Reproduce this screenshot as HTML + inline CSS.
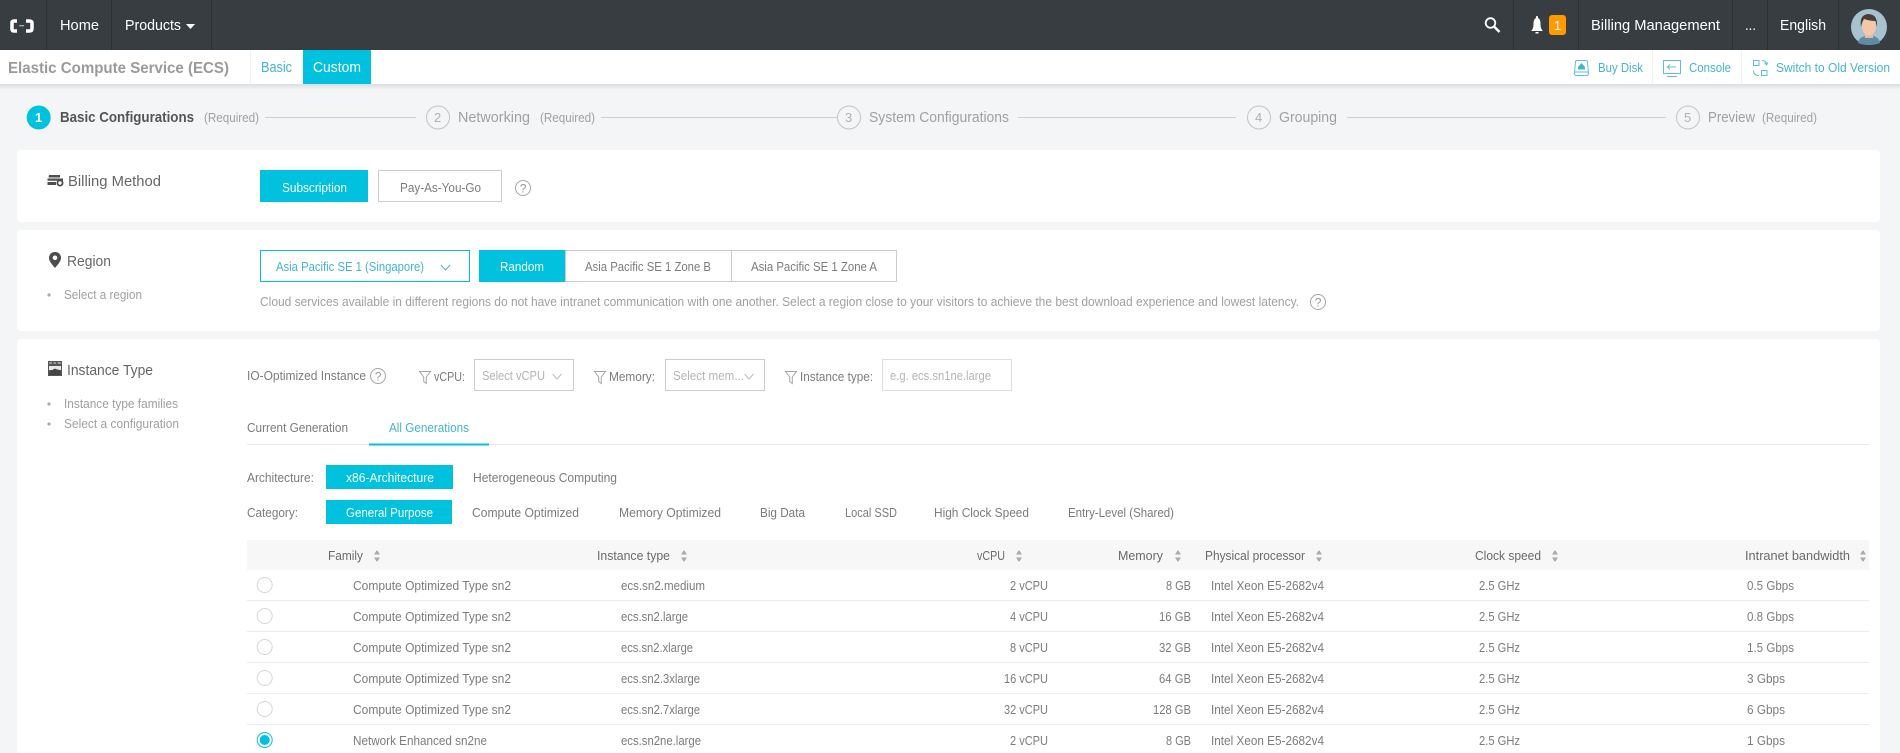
<!DOCTYPE html>
<html lang="en">
<head>
<meta charset="utf-8">
<title>Elastic Compute Service (ECS)</title>
<style>
html,body{margin:0;padding:0;width:1900px;height:753px;overflow:hidden;background:#f4f5f6}
svg{display:block}
text{font-family:"Liberation Sans",sans-serif;font-size:13px;fill:#7c7c7c}
.nav{font-size:15px;fill:#fff}
.teal{fill:#45b4cf}
.w{fill:#fff}
.d{fill:#666}
.l{fill:#a0a0a0}
.p{fill:#b4b4b4}
.st{font-size:15px;fill:#a0a0a0}
.h{font-size:15px;fill:#666}
.th{fill:#6a6a6a}
.ln{stroke:#cfcfcf;stroke-width:1}
.rd{fill:#fff;stroke:#d6d6d6;stroke-width:1}
.sep{stroke:#f0f0f0;stroke-width:1}
.si{fill:#aaa}
</style>
</head>
<body>
<svg width="1900" height="753" viewBox="0 0 1900 753" xmlns="http://www.w3.org/2000/svg">
<defs>
<linearGradient id="sh" x1="0" y1="0" x2="0" y2="1"><stop offset="0" stop-color="#000" stop-opacity=".1"/><stop offset="1" stop-color="#000" stop-opacity="0"/></linearGradient>
<g id="sort"><path d="M0 -1.5L-3 -1.5L0 -6L3 -1.5Z M-3 1.5L3 1.5L0 6Z" class="si"/></g>
<g id="q"><circle cx="0" cy="0" r="7.5" fill="none" stroke="#a5a5a5" stroke-width="1"/><text x="-3.3" y="4.5" style="font-size:12px;fill:#999">?</text></g>
<path id="fl" d="M0.5 0.5H11.5L7.3 6V12.5L4.7 10.5V6Z" fill="none" stroke="#a5a5a5" stroke-width="1"/>
</defs>
<rect width="1900" height="753" fill="#f4f5f6"/>

<!-- top nav -->
<rect width="1900" height="50" fill="#373d41"/>
<g stroke="#2c3134" stroke-width="1">
<path d="M46.5 0V50M111.5 0V50M211.5 0V50M1513.5 0V50M1578.5 0V50M1732.5 0V50M1767.5 0V50M1838.5 0V50"/>
</g>
<path d="M17 21H14Q12 21 12 23V29Q12 31 14 31H17M26 21H29Q32 21 32 23V29Q32 31 29 31H26" fill="none" stroke="#fff" stroke-width="3.5"/>
<rect x="19.3" y="25" width="4.8" height="1.4" fill="#a8a8a8"/>
<text class="nav" x="60" y="30" textLength="39" lengthAdjust="spacingAndGlyphs">Home</text>
<text class="nav" x="125" y="30" textLength="56" lengthAdjust="spacingAndGlyphs">Products</text>
<path d="M186 24H195L190.5 29Z" fill="#fff"/>
<circle cx="1490.5" cy="23" r="4.8" fill="none" stroke="#fff" stroke-width="1.8"/>
<path d="M1494 26.5L1499.5 32" stroke="#fff" stroke-width="2.4"/>
<path d="M1531 31Q1533.5 29 1533.5 24Q1533.5 19 1536 18V16.5Q1537 15.5 1538 16.5V18Q1540.5 19 1540.5 24Q1540.5 29 1543 31Z M1535.5 32H1538.5V33.5H1535.5Z" fill="#fff"/>
<rect x="1549" y="15" width="17" height="20" rx="3" fill="#ff9a00"/>
<text x="1554" y="30" style="font-size:13px;fill:#fff">1</text>
<text class="nav" x="1591" y="30" textLength="129" lengthAdjust="spacingAndGlyphs">Billing Management</text>
<text class="nav" x="1745" y="30" textLength="11" lengthAdjust="spacingAndGlyphs">...</text>
<text class="nav" x="1780" y="30" textLength="46" lengthAdjust="spacingAndGlyphs">English</text>
<circle cx="1869" cy="27" r="18" fill="#a8c3cf"/>
<path d="M1858 43Q1859 37 1865 36H1873Q1879 37 1880 43Q1875 45 1869 45Q1863 45 1858 43Z" fill="#5f8ca3"/>
<rect x="1865" y="31" width="8" height="7" fill="#e9bb9c"/>
<ellipse cx="1869" cy="26" rx="7" ry="9.5" fill="#f2c8a9"/>
<path d="M1861 27Q1859 15 1868 14Q1878 14 1877 27L1875.5 21Q1870 21 1864 19Q1862 22 1861 27Z" fill="#4a3e3a"/>

<!-- subnav -->
<rect y="84" width="1900" height="6" fill="url(#sh)"/>
<rect y="50" width="1900" height="34" fill="#fff"/>
<text x="8" y="73" textLength="221" lengthAdjust="spacingAndGlyphs" style="font-size:16px;font-weight:bold;fill:#9a9a9a">Elastic Compute Service (ECS)</text>
<path d="M250.5 50V84" class="sep"/>
<text class="teal" x="261" y="72" textLength="31" lengthAdjust="spacingAndGlyphs" style="font-size:15px">Basic</text>
<rect x="303" y="50" width="68" height="34" fill="#00c1de"/>
<text class="w" x="313" y="72" textLength="48" lengthAdjust="spacingAndGlyphs" style="font-size:15px">Custom</text>

<g fill="none" stroke="#5fbfd6" stroke-width="1">
<path d="M1577 60.5H1586Q1587.5 60.5 1587.5 62L1588.5 73.5Q1588.5 75.5 1586.5 75.5H1576.5Q1574.5 75.5 1574.5 73.5L1575.5 62Q1575.5 60.5 1577 60.5Z"/>
<path d="M1575 72H1588"/>
<path d="M1663.5 60.5H1680.5V73.5H1663.5ZM1667 76.5H1677M1676 67H1668M1670 64.5L1667.5 67L1670 69.5"/>
<path d="M1753.5 60.5H1759V65.5H1753.5ZM1761.5 70.5H1767V75.5H1761.5ZM1762 60.5Q1766.5 60.5 1766.5 64.5M1764.5 62.5L1766.5 65L1768 62.5M1759 75.5Q1753.5 75.5 1753.5 70.5"/>
</g>
<path d="M1581.5 63L1585 67H1578Z" fill="#45b4cf"/>
<rect x="1578" y="67" width="7" height="2.5" fill="#45b4cf"/>
<path d="M1652.5 50V84M1741.5 50V84" class="sep"/>
<text class="teal" x="1598" y="72" textLength="45" lengthAdjust="spacingAndGlyphs">Buy Disk</text>
<text class="teal" x="1689" y="72" textLength="42" lengthAdjust="spacingAndGlyphs">Console</text>
<text class="teal" x="1776" y="72" textLength="114" lengthAdjust="spacingAndGlyphs">Switch to Old Version</text>

<!-- steps -->
<circle cx="38.7" cy="117.5" r="12" fill="#00c1de"/>
<text x="35" y="122" style="font-size:13px;font-weight:bold;fill:#fff">1</text>
<text x="60" y="122" textLength="134" lengthAdjust="spacingAndGlyphs" style="font-size:15px;font-weight:bold;fill:#555">Basic Configurations</text>
<text class="l" x="204" y="122" textLength="55" lengthAdjust="spacingAndGlyphs">(Required)</text>
<path class="ln" d="M265 117.5H416M601 117.5H837M1018 117.5H1236M1347 117.5H1666"/>
<g fill="#f4f5f6" stroke="#c4c4c4" stroke-width="1">
<circle cx="438" cy="117.5" r="11.5"/><circle cx="849" cy="117.5" r="11.5"/><circle cx="1259" cy="117.5" r="11.5"/><circle cx="1688" cy="117.5" r="11.5"/>
</g>
<text x="434" y="122" style="font-size:13px;fill:#b0b0b0">2</text>
<text x="845" y="122" style="font-size:13px;fill:#b0b0b0">3</text>
<text x="1255" y="122" style="font-size:13px;fill:#b0b0b0">4</text>
<text x="1684" y="122" style="font-size:13px;fill:#b0b0b0">5</text>
<text class="st" x="458" y="122" textLength="72" lengthAdjust="spacingAndGlyphs">Networking</text>
<text class="l" x="540" y="122" textLength="55" lengthAdjust="spacingAndGlyphs">(Required)</text>
<text class="st" x="869" y="122" textLength="140" lengthAdjust="spacingAndGlyphs">System Configurations</text>
<text class="st" x="1279" y="122" textLength="58" lengthAdjust="spacingAndGlyphs">Grouping</text>
<text class="st" x="1708" y="122" textLength="47" lengthAdjust="spacingAndGlyphs">Preview</text>
<text class="l" x="1762" y="122" textLength="55" lengthAdjust="spacingAndGlyphs">(Required)</text>

<!-- cards -->
<rect x="17" y="150" width="1863" height="72" rx="4" fill="#fff"/>
<rect x="17" y="230" width="1863" height="101" rx="4" fill="#fff"/>
<rect x="17" y="339" width="1863" height="430" rx="4" fill="#fff"/>

<!-- billing -->
<path d="M49 175H60V177.5H48.5ZM47.5 178.5H63V180.8H47.5ZM47.5 182H56V185H47.5Z" fill="#4e4e4e"/>
<circle cx="60" cy="183" r="2.6" fill="#fff" stroke="#4e4e4e" stroke-width="1.8"/>
<text class="h" x="68" y="186" textLength="93" lengthAdjust="spacingAndGlyphs">Billing Method</text>
<rect x="260" y="170" width="108" height="32" fill="#00c1de"/>
<text class="w" x="282" y="192" textLength="65" lengthAdjust="spacingAndGlyphs">Subscription</text>
<rect x="378.5" y="170.5" width="123" height="31" fill="#fff" stroke="#ccc"/>
<text x="400" y="192" textLength="81" lengthAdjust="spacingAndGlyphs">Pay-As-You-Go</text>
<use href="#q" x="523" y="188"/>

<!-- region -->
<path d="M55 252C51 252 49 255 49 258C49 261.5 53 265.5 55 268C57 265.5 61 261.5 61 258C61 255 59 252 55 252Z" fill="#4e4e4e"/>
<circle cx="55" cy="257.8" r="2.3" fill="#fff"/>
<text class="h" x="67" y="266" textLength="44" lengthAdjust="spacingAndGlyphs">Region</text>
<circle cx="49" cy="295" r="1.6" fill="#aaa"/>
<text class="l" x="64" y="299" textLength="78" lengthAdjust="spacingAndGlyphs">Select a region</text>
<rect x="260.5" y="250.5" width="209" height="31" fill="#fff" stroke="#00c1de"/>
<text class="teal" x="276" y="271" textLength="148" lengthAdjust="spacingAndGlyphs">Asia Pacific SE 1 (Singapore)</text>
<path d="M441 265L445.5 270L450 265" fill="none" stroke="#45b4cf"/>
<rect x="565.5" y="250.5" width="331" height="31" fill="#fff" stroke="#ccc"/>
<path d="M731.5 250V282" stroke="#ccc"/>
<rect x="479" y="250" width="86" height="32" fill="#00c1de"/>
<text class="w" x="500" y="271" textLength="44" lengthAdjust="spacingAndGlyphs">Random</text>
<text x="585" y="271" textLength="126" lengthAdjust="spacingAndGlyphs">Asia Pacific SE 1 Zone B</text>
<text x="751" y="271" textLength="126" lengthAdjust="spacingAndGlyphs">Asia Pacific SE 1 Zone A</text>
<text class="l" x="260" y="306" textLength="1039" lengthAdjust="spacingAndGlyphs">Cloud services available in different regions do not have intranet communication with one another. Select a region close to your visitors to achieve the best download experience and lowest latency.</text>
<use href="#q" x="1318" y="302"/>

<!-- instance type -->
<rect x="48" y="361" width="14" height="15" fill="#555"/>
<path d="M49 363H52M53.5 363H56M57.5 363H61" stroke="#ddd" stroke-width="1"/>
<rect x="49" y="366" width="12" height="4" fill="#e8e8e8"/>
<path d="M49 375Q49 371 52 371Q54 367.5 57 369.5Q60 369.5 60.5 372V375Z" fill="#444"/>
<text class="h" x="67" y="375" textLength="86" lengthAdjust="spacingAndGlyphs">Instance Type</text>
<circle cx="49" cy="404" r="1.6" fill="#aaa"/>
<circle cx="49" cy="424" r="1.6" fill="#aaa"/>
<text class="l" x="64" y="408" textLength="114" lengthAdjust="spacingAndGlyphs">Instance type families</text>
<text class="l" x="64" y="428" textLength="115" lengthAdjust="spacingAndGlyphs">Select a configuration</text>

<text x="247" y="380" textLength="119" lengthAdjust="spacingAndGlyphs">IO-Optimized Instance</text>
<use href="#q" x="378" y="376"/>
<use href="#fl" x="419" y="371"/>
<text x="434" y="381" textLength="31" lengthAdjust="spacingAndGlyphs">vCPU:</text>
<rect x="474.5" y="359.5" width="99" height="31" fill="#fff" stroke="#ccc"/>
<text class="p" x="482" y="380" textLength="63" lengthAdjust="spacingAndGlyphs">Select vCPU</text>
<path d="M552.5 374L557 379L561.5 374" fill="none" stroke="#bbb"/>
<use href="#fl" x="594" y="371"/>
<text x="609" y="381" textLength="46" lengthAdjust="spacingAndGlyphs">Memory:</text>
<rect x="665.5" y="359.5" width="99" height="31" fill="#fff" stroke="#ccc"/>
<text class="p" x="673" y="380" textLength="71" lengthAdjust="spacingAndGlyphs">Select mem...</text>
<path d="M744.5 374L749 379L753.5 374" fill="none" stroke="#bbb"/>
<use href="#fl" x="785" y="371"/>
<text x="800" y="381" textLength="73" lengthAdjust="spacingAndGlyphs">Instance type:</text>
<rect x="882.5" y="359.5" width="129" height="31" fill="#fff" stroke="#ddd"/>
<text class="p" x="890" y="380" textLength="101" lengthAdjust="spacingAndGlyphs">e.g. ecs.sn1ne.large</text>

<!-- tabs -->
<text x="247" y="432" textLength="101" lengthAdjust="spacingAndGlyphs">Current Generation</text>
<text class="teal" x="389" y="432" textLength="80" lengthAdjust="spacingAndGlyphs">All Generations</text>
<path d="M247 444.5H1869" stroke="#e8e8e8"/>
<rect x="369" y="443.5" width="120" height="2" fill="#00c1de"/>

<!-- arch / category -->
<text x="247" y="482" textLength="67" lengthAdjust="spacingAndGlyphs">Architecture:</text>
<rect x="326" y="465" width="127" height="24" fill="#00c1de"/>
<text class="w" x="346" y="482" textLength="88" lengthAdjust="spacingAndGlyphs">x86-Architecture</text>
<text x="473" y="482" textLength="144" lengthAdjust="spacingAndGlyphs">Heterogeneous Computing</text>
<text x="247" y="517" textLength="51" lengthAdjust="spacingAndGlyphs">Category:</text>
<rect x="326" y="500" width="126" height="24" fill="#00c1de"/>
<text class="w" x="346" y="517" textLength="87" lengthAdjust="spacingAndGlyphs">General Purpose</text>
<text x="472" y="517" textLength="107" lengthAdjust="spacingAndGlyphs">Compute Optimized</text>
<text x="619" y="517" textLength="102" lengthAdjust="spacingAndGlyphs">Memory Optimized</text>
<text x="760" y="517" textLength="45" lengthAdjust="spacingAndGlyphs">Big Data</text>
<text x="845" y="517" textLength="52" lengthAdjust="spacingAndGlyphs">Local SSD</text>
<text x="934" y="517" textLength="95" lengthAdjust="spacingAndGlyphs">High Clock Speed</text>
<text x="1068" y="517" textLength="106" lengthAdjust="spacingAndGlyphs">Entry-Level (Shared)</text>

<!-- table header -->
<rect x="247" y="540" width="1622" height="30" fill="#f7f7f7"/>
<text class="th" x="328" y="560" textLength="35" lengthAdjust="spacingAndGlyphs">Family</text>
<use href="#sort" x="377" y="556"/>
<text class="th" x="597" y="560" textLength="73" lengthAdjust="spacingAndGlyphs">Instance type</text>
<use href="#sort" x="684" y="556"/>
<text class="th" x="977" y="560" textLength="28" lengthAdjust="spacingAndGlyphs">vCPU</text>
<use href="#sort" x="1019" y="556"/>
<text class="th" x="1118" y="560" textLength="45" lengthAdjust="spacingAndGlyphs">Memory</text>
<use href="#sort" x="1178" y="556"/>
<text class="th" x="1205" y="560" textLength="100" lengthAdjust="spacingAndGlyphs">Physical processor</text>
<use href="#sort" x="1319" y="556"/>
<text class="th" x="1475" y="560" textLength="66" lengthAdjust="spacingAndGlyphs">Clock speed</text>
<use href="#sort" x="1555" y="556"/>
<text class="th" x="1745" y="560" textLength="105" lengthAdjust="spacingAndGlyphs">Intranet bandwidth</text>
<use href="#sort" x="1863" y="556"/>

<!-- rows -->
<path d="M247 600.5H1869M247 631.5H1869M247 662.5H1869M247 693.5H1869M247 724.5H1869" stroke="#ececec"/>
<circle class="rd" cx="264.7" cy="585" r="7.5"/>
<circle class="rd" cx="264.7" cy="616" r="7.5"/>
<circle class="rd" cx="264.7" cy="647" r="7.5"/>
<circle class="rd" cx="264.7" cy="678" r="7.5"/>
<circle class="rd" cx="264.7" cy="709" r="7.5"/>
<circle cx="264.7" cy="740" r="7.5" fill="#fff" stroke="#00c1de"/>
<circle cx="264.7" cy="740" r="5" fill="#00c1de"/>

<g text-anchor="start">
<text x="353" y="590" textLength="158" lengthAdjust="spacingAndGlyphs">Compute Optimized Type sn2</text>
<text x="353" y="621" textLength="158" lengthAdjust="spacingAndGlyphs">Compute Optimized Type sn2</text>
<text x="353" y="652" textLength="158" lengthAdjust="spacingAndGlyphs">Compute Optimized Type sn2</text>
<text x="353" y="683" textLength="158" lengthAdjust="spacingAndGlyphs">Compute Optimized Type sn2</text>
<text x="353" y="714" textLength="158" lengthAdjust="spacingAndGlyphs">Compute Optimized Type sn2</text>
<text x="353" y="745" textLength="134" lengthAdjust="spacingAndGlyphs">Network Enhanced sn2ne</text>

<text x="621" y="590" textLength="84" lengthAdjust="spacingAndGlyphs">ecs.sn2.medium</text>
<text x="621" y="621" textLength="67" lengthAdjust="spacingAndGlyphs">ecs.sn2.large</text>
<text x="621" y="652" textLength="72" lengthAdjust="spacingAndGlyphs">ecs.sn2.xlarge</text>
<text x="621" y="683" textLength="79" lengthAdjust="spacingAndGlyphs">ecs.sn2.3xlarge</text>
<text x="621" y="714" textLength="79" lengthAdjust="spacingAndGlyphs">ecs.sn2.7xlarge</text>
<text x="621" y="745" textLength="80" lengthAdjust="spacingAndGlyphs">ecs.sn2ne.large</text>

<text x="1010" y="590" textLength="38" lengthAdjust="spacingAndGlyphs">2 vCPU</text>
<text x="1010" y="621" textLength="38" lengthAdjust="spacingAndGlyphs">4 vCPU</text>
<text x="1010" y="652" textLength="38" lengthAdjust="spacingAndGlyphs">8 vCPU</text>
<text x="1004" y="683" textLength="44" lengthAdjust="spacingAndGlyphs">16 vCPU</text>
<text x="1004" y="714" textLength="44" lengthAdjust="spacingAndGlyphs">32 vCPU</text>
<text x="1010" y="745" textLength="38" lengthAdjust="spacingAndGlyphs">2 vCPU</text>

<text x="1166" y="590" textLength="25" lengthAdjust="spacingAndGlyphs">8 GB</text>
<text x="1159" y="621" textLength="32" lengthAdjust="spacingAndGlyphs">16 GB</text>
<text x="1159" y="652" textLength="32" lengthAdjust="spacingAndGlyphs">32 GB</text>
<text x="1159" y="683" textLength="32" lengthAdjust="spacingAndGlyphs">64 GB</text>
<text x="1153" y="714" textLength="38" lengthAdjust="spacingAndGlyphs">128 GB</text>
<text x="1166" y="745" textLength="25" lengthAdjust="spacingAndGlyphs">8 GB</text>

<text x="1211" y="590" textLength="113" lengthAdjust="spacingAndGlyphs">Intel Xeon E5-2682v4</text>
<text x="1211" y="621" textLength="113" lengthAdjust="spacingAndGlyphs">Intel Xeon E5-2682v4</text>
<text x="1211" y="652" textLength="113" lengthAdjust="spacingAndGlyphs">Intel Xeon E5-2682v4</text>
<text x="1211" y="683" textLength="113" lengthAdjust="spacingAndGlyphs">Intel Xeon E5-2682v4</text>
<text x="1211" y="714" textLength="113" lengthAdjust="spacingAndGlyphs">Intel Xeon E5-2682v4</text>
<text x="1211" y="745" textLength="113" lengthAdjust="spacingAndGlyphs">Intel Xeon E5-2682v4</text>

<text x="1479" y="590" textLength="41" lengthAdjust="spacingAndGlyphs">2.5 GHz</text>
<text x="1479" y="621" textLength="41" lengthAdjust="spacingAndGlyphs">2.5 GHz</text>
<text x="1479" y="652" textLength="41" lengthAdjust="spacingAndGlyphs">2.5 GHz</text>
<text x="1479" y="683" textLength="41" lengthAdjust="spacingAndGlyphs">2.5 GHz</text>
<text x="1479" y="714" textLength="41" lengthAdjust="spacingAndGlyphs">2.5 GHz</text>
<text x="1479" y="745" textLength="41" lengthAdjust="spacingAndGlyphs">2.5 GHz</text>

<text x="1747" y="590" textLength="47" lengthAdjust="spacingAndGlyphs">0.5 Gbps</text>
<text x="1747" y="621" textLength="47" lengthAdjust="spacingAndGlyphs">0.8 Gbps</text>
<text x="1747" y="652" textLength="47" lengthAdjust="spacingAndGlyphs">1.5 Gbps</text>
<text x="1747" y="683" textLength="38" lengthAdjust="spacingAndGlyphs">3 Gbps</text>
<text x="1747" y="714" textLength="38" lengthAdjust="spacingAndGlyphs">6 Gbps</text>
<text x="1747" y="745" textLength="38" lengthAdjust="spacingAndGlyphs">1 Gbps</text>
</g>
</svg>
</body>
</html>
